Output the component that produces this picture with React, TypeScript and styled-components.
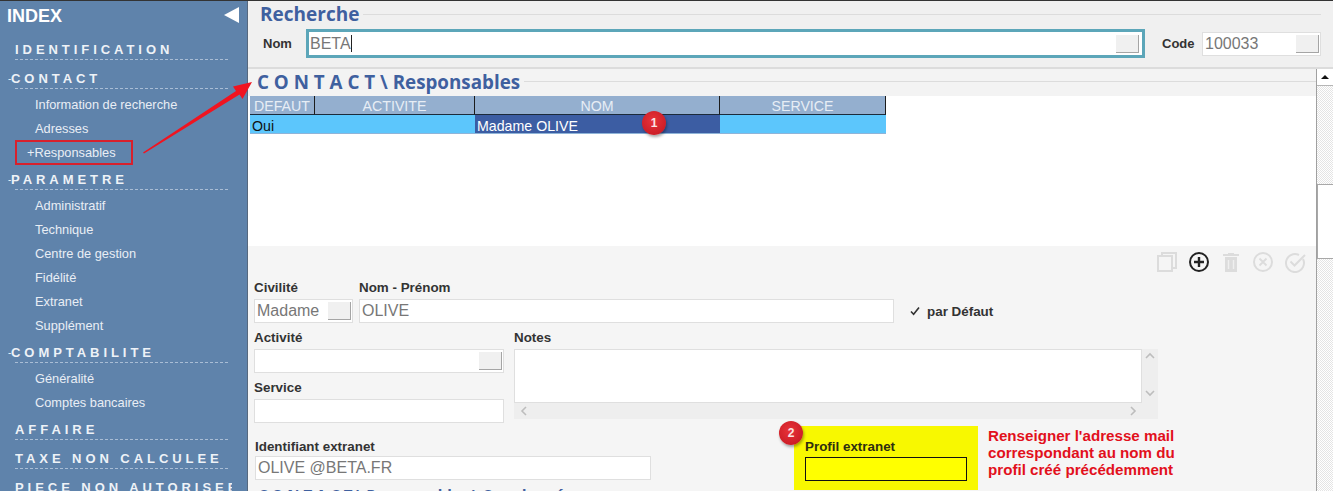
import React from "react";
import styled, { createGlobalStyle } from "styled-components";

const Global = createGlobalStyle`
  html, body { margin: 0; padding: 0; background: #f5f5f5; }
  * { box-sizing: border-box; }
`;

const Page = styled.div`
  position: relative;
  width: 1333px;
  height: 491px;
  display: flex;
  overflow: hidden;
  border-top: 1px solid #333;
  font-family: "Liberation Sans", Arial, sans-serif;
`;

const Sidebar = styled.aside`
  width: 248px;
  flex: none;
  background: #5f83ab;
  border-right: 1px solid #56687e;
  color: #fff;
`;

const SideHead = styled.div`
  display: flex;
  align-items: center;
  justify-content: space-between;
  height: 38px;
  padding: 0 8px 8px 7px;
  font-size: 18px;
  font-weight: 700;
`;

const Collapse = styled.span`
  width: 0;
  height: 0;
  border-top: 8px solid transparent;
  border-bottom: 8px solid transparent;
  border-right: 15px solid #fff;
  margin-top: -2px;
`;

const Section = styled.div<{ $open?: boolean }>`
  padding-bottom: ${(p) => (p.$open ? "0" : "8px")};
`;

const Heading = styled.div`
  display: flex;
  align-items: center;
  margin-left: 15px;
  width: 213px;
  height: 21px;
  border-bottom: 1px dashed #a9bdd5;
  font-size: 13px;
  font-weight: 700;
  letter-spacing: 3.95px;
  color: #eef2f7;
  white-space: nowrap;
`;

const Toggle = styled.span`
  margin-left: -7px;
  font-size: 10px;
  font-weight: 400;
  letter-spacing: 0;
  width: 3px;
  flex: none;
`;

const HeadingText = styled.span`
  flex: none;
  max-width: 217px;
  overflow: hidden;
`;

const Items = styled.div`
  padding: 3px 0 5px;
`;

const Item = styled.div`
  height: 24px;
  line-height: 26px;
  padding-left: 35px;
  font-size: 12.8px;
  color: #e9eef5;
`;

const ActiveItem = styled(Item)`
  width: 118px;
  height: 25px;
  line-height: 22px;
  margin: 0 0 -1px 15px;
  padding-left: 10px;
  border: 2px solid #d8202c;
`;

const Main = styled.main`
  flex: 1;
  min-width: 0;
  display: flex;
  flex-direction: column;
`;

const Search = styled.section`
  height: 68px;
  flex: none;
  background: #f0f0f0;
  border-bottom: 2px solid #dcdcdc;
  padding: 1px 12px 0 12px;
`;

const TitleRow = styled.div`
  display: flex;
  align-items: center;
  gap: 4px;
  &::after {
    content: "";
    flex: 1;
    border-top: 1px solid #dcdcdc;
  }
`;

const Title = styled.h2`
  margin: 0;
  font: 700 19px/24px "Open Sans", sans-serif;
  color: #3f609f;
  white-space: nowrap;
`;

const SearchBar = styled.div`
  display: flex;
  align-items: center;
  margin-top: 3px;
`;

const SearchLabel = styled.label<{ $width: number }>`
  width: ${(p) => p.$width}px;
  padding-left: 3px;
  font-size: 13px;
  font-weight: 700;
  color: #333;
`;

const Input = styled.div<{ $w?: number; $h?: number }>`
  width: ${(p) => (p.$w ? `${p.$w}px` : "100%")};
  height: ${(p) => p.$h ?? 24}px;
  flex: none;
  display: flex;
  align-items: center;
  justify-content: space-between;
  padding: 0 1px 0 2px;
  background: #fff;
  border: 1px solid #dfdfdf;
  font-size: 16px;
  color: #777;
  white-space: nowrap;
`;

const NomInput = styled(Input)`
  height: 29px;
  margin-right: 14px;
  border: 3px solid #5ca6b9;
  padding: 0 3px 0 1px;
`;

const Caret = styled.span`
  display: inline-block;
  width: 1px;
  height: 17px;
  background: #222;
  vertical-align: -3px;
`;

const PickButton = styled.span`
  width: 23px;
  height: 18px;
  flex: none;
  background: #f0f0f0;
  border-right: 1px solid #a5a5a5;
  border-bottom: 1px solid #a5a5a5;
`;

const Body = styled.div`
  flex: 1;
  min-height: 0;
  display: flex;
`;

const Content = styled.div`
  flex: 1;
  min-width: 0;
  overflow: hidden;
  background: #f5f5f5;
`;

const SectionTitle = styled(TitleRow)`
  height: 27px;
  padding: 0 0 2px 9px;
  background: #f3f3f3;
  & > ${Title} {
    font-size: 18.8px;
  }
`;

const TableArea = styled.div`
  height: 150px;
  background: #fff;
  padding-left: 2px;
`;

const Table = styled.div`
  width: 636px;
  display: grid;
  grid-template-columns: 65px 160px 245px 166px;
`;

const HeadCell = styled.div`
  height: 19px;
  line-height: 20px;
  text-align: center;
  font-size: 14.2px;
  color: #e7edf5;
  background: #94afcf;
  border-right: 1px solid #1c1c1c;
  border-bottom: 1px solid #1c2a3a;
`;

const RowCell = styled.div<{ $selected?: boolean }>`
  position: relative;
  height: 19px;
  line-height: 22px;
  padding-left: 2px;
  font-size: 14.2px;
  color: ${(p) => (p.$selected ? "#fff" : "#111")};
  background: ${(p) => (p.$selected ? "#3c5da3" : "#5cc6fc")};
  border-bottom: 1px solid #8fb4d8;
`;

const Badge = styled.span`
  position: absolute;
  width: 24px;
  height: 24px;
  border-radius: 50%;
  display: flex;
  align-items: center;
  justify-content: center;
  font-size: 12px;
  font-weight: 700;
  color: #fbe4e4;
  background: radial-gradient(circle at 45% 40%, #e8333a, #c1151f);
  box-shadow: 1px 2px 3px rgba(0, 0, 0, 0.35);
`;

const RowBadge = styled(Badge)`
  left: 167px;
  top: -4px;
`;

const Toolbar = styled.div`
  height: 34px;
  display: flex;
  align-items: center;
  justify-content: flex-end;
  gap: 10px;
  padding: 0 10px 2px 0;
`;

const Form = styled.div`
  padding-left: 6px;
`;

const FormRow = styled.div<{ $gap?: number }>`
  display: flex;
  gap: ${(p) => p.$gap ?? 6}px;
`;

const Field = styled.div<{ $w?: number }>`
  width: ${(p) => (p.$w ? `${p.$w}px` : "auto")};
  flex: none;
`;

const Label = styled.div`
  height: 16px;
  line-height: 16px;
  margin-bottom: 4px;
  font-size: 13.4px;
  font-weight: 700;
  color: #333;
  white-space: nowrap;
`;

const TopRow = styled(FormRow)`
  & ${Label} {
    margin-bottom: 3px;
  }
`;

const MiddleRow = styled(FormRow)`
  margin-top: 6px;
  & ${Label} {
    line-height: 17px;
  }
`;

const Check = styled.div`
  display: flex;
  align-items: center;
  gap: 7px;
  height: 24px;
  margin: 19px 0 0 10px;
  font-size: 13.4px;
  font-weight: 700;
  color: #333;
`;

const Stack = styled.div`
  width: 250px;
  flex: none;
  display: flex;
  flex-direction: column;
  gap: 6px;
`;

const NotesBox = styled.div`
  width: 644px;
  height: 70px;
  background: #eeeeee;
  display: grid;
  grid-template-columns: 628px 16px;
  grid-template-rows: 54px 16px;
`;

const NotesArea = styled.div`
  background: #fff;
  border: 1px solid #dfdfdf;
`;

const NotesV = styled.div`
  display: flex;
  flex-direction: column;
  justify-content: space-between;
  align-items: center;
  padding: 2px 0 5px;
`;

const NotesH = styled.div`
  grid-column: 1 / span 2;
  display: flex;
  align-items: center;
  justify-content: space-between;
  padding: 0 20px 0 5px;
`;

const Bottom = styled(FormRow)`
  margin-top: 3px;
  height: 64px;
  gap: 0;
`;

const ExtranetField = styled(Field)`
  margin: 13px 0 0 1px;
  & > ${Label} {
    margin-bottom: 1px;
  }
`;

const YellowBox = styled.div`
  position: relative;
  width: 184px;
  height: 64px;
  margin-left: 143px;
  padding: 13px 0 0 11px;
  background: #f8f800;
`;

const YellowLabel = styled(Label)`
  margin-bottom: 2px;
  color: #2e2e10;
`;

const YellowInput = styled.div`
  width: 162px;
  height: 24px;
  border: 1px solid #111;
  background: #ffff00;
`;

const YellowBadge = styled(Badge)`
  left: -15px;
  top: -5px;
`;

const Note = styled.p`
  margin: 1px 0 0 10px;
  font-size: 15.15px;
  line-height: 17px;
  font-weight: 700;
  color: #e2101c;
  white-space: pre-line;
`;

const NextTitle = styled(Title)`
  margin: -8px 0 0 4px;
  font-size: 15px;
  line-height: 24px;
`;

const Scrollbar = styled.div`
  width: 17px;
  flex: none;
  display: flex;
  flex-direction: column;
  border-left: 1px solid #a0a0a0;
  background: repeating-conic-gradient(#ffffff 0 25%, #e4e4e4 0 50%) 0 0 / 2px 2px;
`;

const ScrollUp = styled.div`
  height: 17px;
  display: flex;
  align-items: center;
  justify-content: center;
  background: #fff;
  border-bottom: 1px solid #b5b5b5;
  &::before {
    content: "";
    border-left: 4px solid transparent;
    border-right: 4px solid transparent;
    border-bottom: 4px solid #111;
  }
`;

const ScrollThumb = styled.div`
  height: 75px;
  margin-top: 98px;
  background: #fff;
  border-top: 1px solid #a8a8a8;
  border-bottom: 1px solid #a8a8a8;
  border-left: 1px solid #a8a8a8;
`;

const ArrowLayer = styled.svg`
  position: absolute;
  left: 0;
  top: -1px;
  pointer-events: none;
`;

const icon = { width: 22, height: 22, viewBox: "0 0 22 22", fill: "none" } as const;
const faint = "#dcdcdc";

const Icons = () => (
  <>
    <svg {...icon} stroke={faint} strokeWidth="2">
      <rect x="2" y="5" width="14" height="15" />
      <path d="M6 5V2h14v15h-4" />
    </svg>
    <svg {...icon} stroke="#222">
      <circle cx="11" cy="11" r="9" strokeWidth="2" />
      <path d="M11 6v10M6 11h10" strokeWidth="2.4" />
    </svg>
    <svg {...icon}>
      <path d="M3 4h16" stroke={faint} strokeWidth="2" />
      <path d="M8 3h6" stroke={faint} strokeWidth="2" />
      <path d="M5 6h12v15H5z" fill={faint} />
      <path d="M8.5 9v9M13.5 9v9" stroke="#efefef" strokeWidth="1.4" />
    </svg>
    <svg {...icon} stroke={faint}>
      <circle cx="11" cy="11" r="9" strokeWidth="2" />
      <path d="M7.5 7.5l7 7M14.5 7.5l-7 7" strokeWidth="1.8" />
    </svg>
    <svg {...icon} stroke={faint}>
      <path d="M19 8a9 9 0 1 1-4-4" strokeWidth="2" />
      <path d="M6.5 10.5l4 4L21 4" strokeWidth="2" />
    </svg>
  </>
);

const Chevron = ({ d }: { d: string }) => (
  <svg width="10" height="10" viewBox="0 0 10 10" fill="none" stroke="#bdbdbd" strokeWidth="1.6">
    <path d={d} />
  </svg>
);

const sections: { name: string; toggle?: boolean; items?: string[]; active?: string }[] = [
  { name: "IDENTIFICATION" },
  { name: "CONTACT", toggle: true, items: ["Information de recherche", "Adresses"], active: "+Responsables" },
  { name: "PARAMETRE", toggle: true, items: ["Administratif", "Technique", "Centre de gestion", "Fidélité", "Extranet", "Supplément"] },
  { name: "COMPTABILITE", toggle: true, items: ["Généralité", "Comptes bancaires"] },
  { name: "AFFAIRE" },
  { name: "TAXE NON CALCULEE" },
  { name: "PIECE NON AUTORISEE" },
];

export default function App() {
  return (
    <Page>
      <Global />
      <Sidebar>
        <SideHead>
          INDEX
          <Collapse />
        </SideHead>
        {sections.map((s) => (
          <Section key={s.name} $open={!!s.items}>
            <Heading>
              {s.toggle && <Toggle>-</Toggle>}
              <HeadingText>{s.name}</HeadingText>
            </Heading>
            {s.items && (
              <Items>
                {s.items.map((i) => (
                  <Item key={i}>{i}</Item>
                ))}
                {s.active && <ActiveItem>{s.active}</ActiveItem>}
              </Items>
            )}
          </Section>
        ))}
      </Sidebar>
      <Main>
        <Search>
          <TitleRow>
            <Title>Recherche</Title>
          </TitleRow>
          <SearchBar>
            <SearchLabel $width={46}>Nom</SearchLabel>
            <NomInput $w={839}>
              <span>
                BETA
                <Caret />
              </span>
              <PickButton />
            </NomInput>
            <SearchLabel $width={43}>Code</SearchLabel>
            <Input $w={119}>
              100033
              <PickButton />
            </Input>
          </SearchBar>
        </Search>
        <Body>
          <Content>
            <SectionTitle>
              <Title>C O N T A C T \ Responsables</Title>
            </SectionTitle>
            <TableArea>
              <Table>
                <HeadCell>DEFAUT</HeadCell>
                <HeadCell>ACTIVITE</HeadCell>
                <HeadCell>NOM</HeadCell>
                <HeadCell>SERVICE</HeadCell>
                <RowCell>Oui</RowCell>
                <RowCell />
                <RowCell $selected>
                  Madame OLIVE
                  <RowBadge>1</RowBadge>
                </RowCell>
                <RowCell />
              </Table>
            </TableArea>
            <Toolbar>
              <Icons />
            </Toolbar>
            <Form>
              <TopRow>
                <Field $w={99}>
                  <Label>Civilité</Label>
                  <Input>
                    Madame
                    <PickButton />
                  </Input>
                </Field>
                <Field $w={535}>
                  <Label>Nom - Prénom</Label>
                  <Input>OLIVE</Input>
                </Field>
                <Check>
                  <svg width="10" height="10" viewBox="0 0 10 10" fill="none" stroke="#333" strokeWidth="1.6">
                    <path d="M1 5.5l2.6 2.8L9 1.5" />
                  </svg>
                  par Défaut
                </Check>
              </TopRow>
              <MiddleRow $gap={10}>
                <Stack>
                  <Field>
                    <Label>Activité</Label>
                    <Input>
                      <span />
                      <PickButton />
                    </Input>
                  </Field>
                  <Field>
                    <Label>Service</Label>
                    <Input />
                  </Field>
                </Stack>
                <Field>
                  <Label>Notes</Label>
                  <NotesBox>
                    <NotesArea />
                    <NotesV>
                      <Chevron d="M1 7l4-4 4 4" />
                      <Chevron d="M1 3l4 4 4-4" />
                    </NotesV>
                    <NotesH>
                      <Chevron d="M7 1L3 5l4 4" />
                      <Chevron d="M3 1l4 4-4 4" />
                    </NotesH>
                  </NotesBox>
                </Field>
              </MiddleRow>
              <Bottom>
                <ExtranetField $w={396}>
                  <Label>Identifiant extranet</Label>
                  <Input>OLIVE @BETA.FR</Input>
                </ExtranetField>
                <YellowBox>
                  <YellowBadge>2</YellowBadge>
                  <YellowLabel>Profil extranet</YellowLabel>
                  <YellowInput />
                </YellowBox>
                <Note>{"Renseigner l'adresse mail\ncorrespondant au nom du\nprofil créé précédemment"}</Note>
              </Bottom>
              <NextTitle>C O N T A C T \ Responsables \ Coordonnées</NextTitle>
            </Form>
          </Content>
          <Scrollbar>
            <ScrollUp />
            <ScrollThumb />
          </Scrollbar>
        </Body>
      </Main>
      <ArrowLayer width="300" height="180" viewBox="0 0 300 180">
        <path d="M143 152.5L236 91l-3-4.5L252 82l-9.5 17-3-4.5L144 153.5z" fill="#f01420" />
      </ArrowLayer>
    </Page>
  );
}
